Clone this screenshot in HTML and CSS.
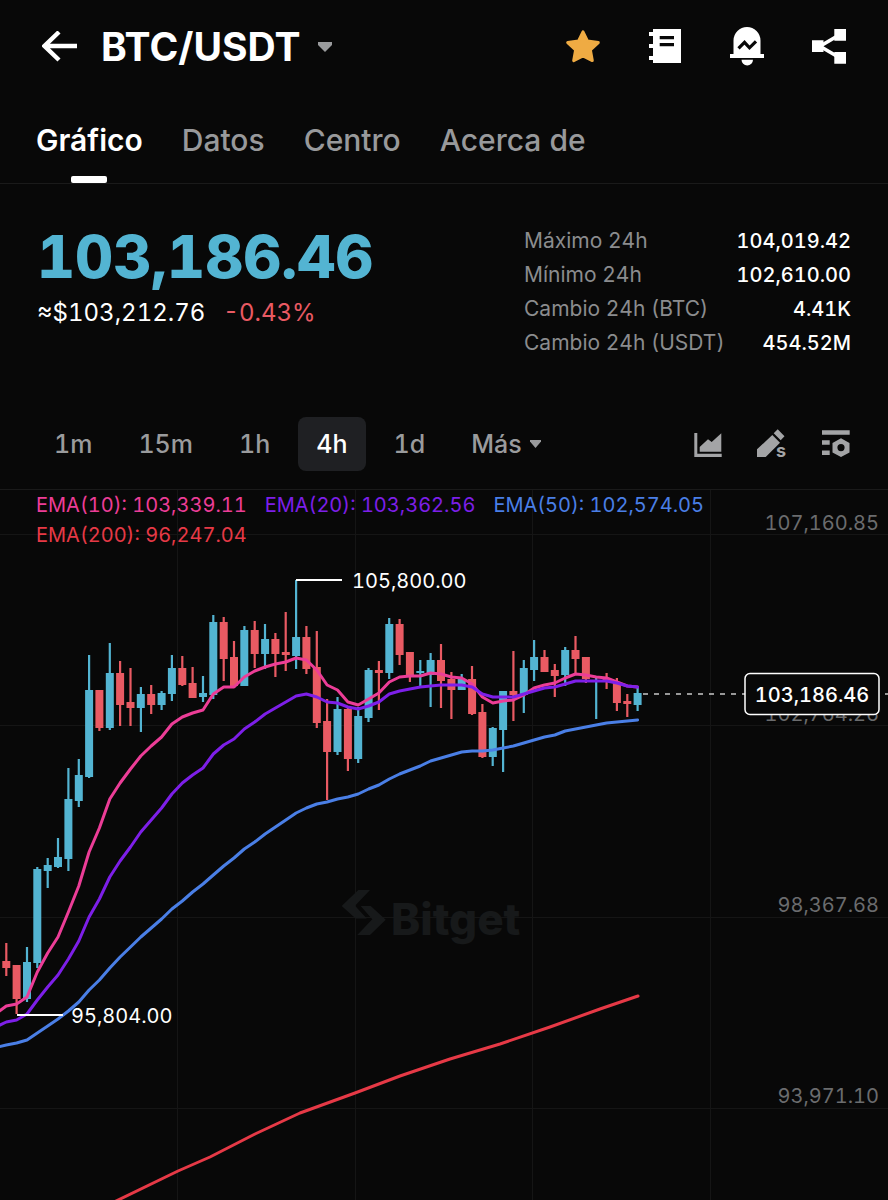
FILE: index.html
```html
<!DOCTYPE html>
<html lang="es">
<head>
    <meta charset="UTF-8">
    <meta name="viewport" content="width=device-width, initial-scale=1.0">
    <title>BTC/USDT</title>
    <link rel="stylesheet" href="styles.css">
</head>
<body>
    <header class="header">
        <button class="icon-btn" aria-label="Volver">
            <svg width="36" height="32" viewBox="0 0 36 32" fill="none" stroke="#fff" stroke-width="4.4"><path d="M17 1 2.500 15 17 29M2.500 15H35"/></svg>
        </button>
        <button class="pair">
            <h1>BTC/USDT</h1>
            <svg width="14" height="10" viewBox="0 0 14 10" fill="#9a9b9d"><path d="M0 0h14v3L7 10 0 3z"/></svg>
        </button>
        <div class="actions">
            <button class="icon-btn" aria-label="Favorito">
                <svg width="40" height="40" viewBox="0 0 40 40" fill="#efab43" stroke="#efab43" stroke-width="3" stroke-linejoin="round"><path d="M20 4.8l4.4 9.2 10.9 1.6-7.9 7.4 1.9 10.6-9.3-4.8-9.3 4.8 1.9-10.6-7.9-7.4L15.600 14z"/></svg>
            </button>
            <button class="icon-btn" aria-label="Órdenes">
                <svg width="40" height="40" viewBox="0 0 40 40" fill="#fff"><path fill-rule="evenodd" d="M8 2h28v34H8v-3H4v-4h4v-8H4v-4h4V9H4V5h4zM14.700 9v3.300H29V9zM14.700 16v3.300H29V16z"/></svg>
            </button>
            <button class="icon-btn" aria-label="Alertas">
                <svg width="40" height="40" viewBox="0 0 40 40" fill="#fff"><path d="M6.500 27V13.500a13.500 13.500 0 0 1 27 0V27H37v4H3v-4z"/><path d="M14.500 32.700h11.500a5.700 5.700 0 0 1-11.500 0z"/><path d="M11.500 21.300l6-6 5 5.500 6.500-6.500" fill="none" stroke="#080808" stroke-width="3.200"/></svg>
            </button>
            <button class="icon-btn" aria-label="Compartir">
                <svg width="40" height="40" viewBox="0 0 40 40" fill="#fff"><path d="M3 13.300h11.500V25H3zM25.300 2H37v11.700H25.300zM25.300 25H37v11.700H25.300z"/><path d="M31 7.500L11 19.300 31 31" fill="none" stroke="#fff" stroke-width="3.600"/></svg>
            </button>
        </div>
    </header>

    <nav class="tabs">
        <a href="#grafico" class="active">Gráfico</a>
        <a href="#datos">Datos</a>
        <a href="#centro">Centro</a>
        <a href="#acerca">Acerca de</a>
    </nav>

    <section class="summary">
        <div class="price">
            <div class="last">103,186.46</div>
            <div class="sub"><span>≈$103,212.76</span><span class="down">-0.43%</span></div>
        </div>
        <table class="stats">
            <tr><th scope="row">Máximo 24h</th><td>104,019.42</td></tr>
            <tr><th scope="row">Mínimo 24h</th><td>102,610.00</td></tr>
            <tr><th scope="row">Cambio 24h (BTC)</th><td>4.41K</td></tr>
            <tr><th scope="row">Cambio 24h (USDT)</th><td>454.52M</td></tr>
        </table>
    </section>

    <div class="toolbar">
        <div class="intervals">
            <button>1m</button>
            <button>15m</button>
            <button>1h</button>
            <button class="active">4h</button>
            <button>1d</button>
            <button>Más <svg width="11" height="8" viewBox="0 0 11 8" fill="#9a9b9d"><path d="M0 0h11v1.500L5.500 8 0 1.500z"/></svg></button>
        </div>
        <div class="tools">
            <button class="icon-btn" aria-label="Tipo de gráfico">
                <svg width="32" height="32" viewBox="0 0 32 32" fill="#a3a4a6"><path d="M2.300 5H5.300v20.700h24.400V29H2.300z"/><path d="M7.700 19L16 11.300l3.700 2.700L29.300 5.300v18.400H7.700z"/></svg>
            </button>
            <button class="icon-btn" aria-label="Dibujar">
                <svg width="32" height="32" viewBox="0 0 32 32" fill="#a3a4a6"><path d="M1 29v-7.700L16.300 7l7.700 7.700L9.700 29zM17.700 5.300l4-4 6.800 7-3.800 4z"/><text x="20" y="29" class="pen-letter">s</text></svg>
            </button>
            <button class="icon-btn" aria-label="Ajustes">
                <svg width="32" height="32" viewBox="0 0 32 32" fill="#a3a4a6"><path d="M2 2.300h27.700v4.400H2zM2 12.300h7.700v4.400H2zM2 22.500h7.700v4.400H2z"/><path fill-rule="evenodd" d="M21 10.300l8.500 4.700v9.400L21 29l-8.500-4.600V15zM21 16a3.600 3.600 0 1 0 0 7.200 3.600 3.600 0 0 0 0-7.200z"/></svg>
            </button>
        </div>
    </div>

    <main class="chart">
        <div class="legend">
            <span class="ema10">EMA(10): 103,339.11</span>
            <span class="ema20">EMA(20): 103,362.56</span>
            <span class="ema50">EMA(50): 102,574.05</span>
            <span class="ema200">EMA(200): 96,247.04</span>
        </div>
        <svg class="plot" viewBox="0 490 888 710">
            <path class="grid" d="M0 534.500H888M0 725.500H888M0 917.500H888M0 1108.500H888M177.500 490V1200M355.500 490V1200M532.500 490V1200M710.500 490V1200"/>
            <g class="watermark">
                <path d="M341.700 906L358.300 890H370L355 905.700 366.700 918.500H355.700zM360.700 906H370.700L385.700 919.700 370 935H357.300L372.300 919.300z"/>
                <text x="391" y="935">Bitget</text>
            </g>
            <g id="candles"></g>
            <path id="ema200" class="line ema200"/>
            <path id="ema50" class="line ema50"/>
            <path id="ema10" class="line ema10"/>
            <path id="ema20" class="line ema20"/>

            <path class="marker" d="M296 580H342M17 1015H63"/>
            <text class="mark" x="352" y="588">105,800.00</text>
            <text class="mark" x="71" y="1023">95,804.00</text>

            <g class="axis">
                <text x="879" y="530">107,160.85</text>
                <text x="879" y="721">102,764.26</text>
                <text x="879" y="912">98,367.68</text>
                <text x="879" y="1103">93,971.10</text>
            </g>
            <path class="last-line" d="M643 694H888"/>
            <rect class="tag" x="745" y="673.500" width="134" height="41" rx="5"/>
            <text class="tag-text" x="812" y="702">103,186.46</text>
        </svg>
    </main>

    <script>
        const START = 6.3;
        const STEP = 10.35;

        // up, high, body top, body bottom, low
        const candles = [
            [0,943,961,968,976],[0,965,965,999,1014],[1,947,962,999,1002],[1,867,869,963,968],
            [1,858,865,871,888],[1,838,857,867,868],[1,768,799,859,871],[1,759,775,801,807],
            [1,655,690,777,778],[0,690,690,728,731],[1,643,673,728,730],[0,661,673,705,726],
            [0,668,702,708,726],[1,687,694,708,732],[0,685,694,705,714],[1,691,693,705,710],
            [1,655,668,694,701],[0,656,668,685,686],[0,667,683,698,698],[1,676,693,697,702],
            [1,615,622,695,699],[0,617,622,659,681],[0,641,657,686,686],[1,626,630,686,686],
            [0,621,630,654,668],[1,624,639,654,669],[0,633,639,654,677],[0,612,652,655,671],
            [1,580,637,656,669],[0,626,637,669,674],[0,631,667,723,728],[0,699,721,752,800],
            [1,697,709,752,755],[0,708,709,759,771],[1,707,716,759,763],[1,668,670,718,722],
            [0,661,670,673,710],[1,618,624,673,679],[0,619,624,655,665],[0,652,652,675,682],
            [1,660,671,673,686],[1,653,660,675,707],[0,644,660,681,708],[0,672,679,690,719],
            [1,674,679,690,690],[0,666,679,714,715],[0,704,712,757,758],[1,727,728,757,766],
            [1,691,691,730,772],[0,651,691,695,721],[1,660,668,695,713],[1,640,657,670,681],
            [0,650,657,672,672],[0,664,670,676,697],[1,647,650,675,686],[0,636,650,659,675],
            [0,657,657,679,683],[1,678,680,682,719],[0,673,678,680,689],[0,678,682,703,711],
            [0,694,701,704,717],[1,688,693,705,711]
        ];

        const ema10 = [1006,1004,997,972,953,937,912,886,852,828,799,783,769,756,746,737,724,717,713,710,694,687,687,677,671,667,664,662,658,660,670,685,690,702,705,699,693,682,677,676,676,673,674,677,678,684,697,703,701,700,695,688,685,683,678,674,675,677,678,682,686,687];
        const ema20 = [1022,1020,1014,1000,987,975,959,941,917,899,877,861,847,832,820,808,794,783,775,768,754,745,739,729,722,714,708,702,696,694,697,702,703,707,709,706,702,694,691,689,687,686,685,685,685,687,694,697,697,697,694,691,688,687,684,681,681,681,681,683,686,687];
        const ema50 = [1045,1043,1040,1033,1026,1019,1011,1002,990,980,968,957,947,937,928,919,909,901,892,884,875,866,858,849,842,834,827,820,813,808,804,802,799,797,794,789,785,779,774,770,766,761,758,755,752,751,751,750,748,746,743,740,737,735,731,729,727,725,723,722,721,720];

        function xAt(i) {
            return START + i * STEP;
        }

        function rect(x, y, width, height) {
            return `<rect x="${x.toFixed(1)}" y="${y}" width="${width}" height="${height}"/>`;
        }

        document.getElementById('candles').innerHTML = candles.map(([up, high, top, bottom, low], i) => {
            const x = xAt(i);
            return `<g class="${up ? 'up' : 'fall'}">` +
                rect(x - 1.1, high, 2.2, low - high) +
                rect(x - 4, top, 8, bottom - top) + '</g>';
        }).join('');

        function drawLine(id, first, values) {
            const points = values.map((y, i) => `L${xAt(i).toFixed(1)} ${y}`).join('');
            document.getElementById(id).setAttribute('d', `M-2 ${first}${points}`);
        }

        drawLine('ema10', 1012, ema10);
        drawLine('ema20', 1026, ema20);
        drawLine('ema50', 1047, ema50);
        document.getElementById('ema200').setAttribute('d',
            'M112 1203L178 1171 210 1157 255 1134 300 1113 355 1093 400 1076 450 1059 500 1044 550 1027 600 1009 638 996');
    </script>
</body>
</html>
```
FILE: styles.css
```css
* {
    box-sizing: border-box;
}

body {
    margin: 0;
    background-color: #080808;
    color: #fff;
    font-family: Inter, "Liberation Sans", sans-serif;
    font-variant-numeric: tabular-nums;
}

button {
    padding: 0;
    border: none;
    background: none;
    color: inherit;
    font: inherit;
    cursor: pointer;
}

svg {
    display: block;
}

.header {
    display: flex;
    align-items: center;
    height: 94px;
    padding: 0 39px 0 42px;
}

.pair {
    display: flex;
    align-items: center;
    gap: 18px;
    margin-left: 23px;
}

.pair h1 {
    margin: 0;
    font-size: 39px;
    font-weight: 700;
    line-height: 48px;
}

.actions {
    display: flex;
    gap: 42px;
    margin-left: auto;
}

.tabs {
    display: flex;
    gap: 39px;
    height: 90px;
    padding: 0 36px;
    border-bottom: 1px solid #1a1a1a;
}

.tabs a {
    position: relative;
    color: #98999b;
    font-size: 30px;
    font-weight: 500;
    line-height: 92px;
    text-decoration: none;
}

.tabs .active {
    color: #fff;
    font-weight: 600;
}

.tabs .active::after {
    content: "";
    position: absolute;
    left: 50%;
    bottom: 0;
    width: 36px;
    height: 7px;
    margin-left: -18px;
    border-radius: 2px;
    background-color: #fff;
}

.summary {
    display: flex;
    justify-content: space-between;
    align-items: flex-start;
    height: 214px;
    padding: 40px 37px 0;
}

.last {
    color: #53b4d2;
    font-size: 59px;
    font-weight: 800;
    line-height: 66px;
}

.sub {
    display: flex;
    gap: 18px;
    font-size: 24px;
    line-height: 46px;
}

.down {
    color: #e95a63;
}

.stats {
    width: 327px;
    border-collapse: collapse;
    font-size: 21px;
    line-height: 34px;
}

.stats th,
.stats td {
    padding: 0;
    white-space: nowrap;
}

.stats th {
    color: #8b8c8e;
    font-weight: 400;
    text-align: left;
}

.stats td {
    font-size: 20px;
    font-weight: 500;
    text-align: right;
}

.toolbar {
    display: flex;
    justify-content: space-between;
    align-items: center;
    height: 92px;
    padding: 0 36px;
    border-bottom: 1px solid #1a1a1a;
}

.intervals {
    display: flex;
    gap: 10px;
}

.intervals button {
    display: flex;
    align-items: center;
    gap: 8px;
    height: 54px;
    padding: 0 18px;
    border-radius: 8px;
    color: #9a9b9d;
    font-size: 25px;
    font-weight: 500;
}

.intervals .active {
    background-color: #1f2023;
    color: #fff;
}

.tools {
    display: flex;
    gap: 32px;
}

.pen-letter {
    font-size: 18px;
    font-weight: 700;
}

.chart {
    position: relative;
}

.legend {
    position: absolute;
    top: 0;
    left: 36px;
    right: 144px;
    display: flex;
    flex-wrap: wrap;
    column-gap: 18px;
    font-size: 20px;
    line-height: 30px;
}

.legend .ema10 { color: #ec3d97; }
.legend .ema20 { color: #7d1fe8; }
.legend .ema50 { color: #4a7fe6; }
.legend .ema200 { color: #e63946; }

.plot {
    width: 100%;
    height: auto;
}

.grid {
    stroke: #151515;
}

.watermark {
    fill: #17191a;
    font-size: 44px;
    font-weight: 800;
}

.up { fill: #53b4d2; }
.fall { fill: #e95a63; }

.line {
    fill: none;
    stroke-width: 3;
    stroke-linejoin: round;
    stroke-linecap: round;
}

.line.ema10 { stroke: #ec3d97; }
.line.ema20 { stroke: #7d1fe8; }
.line.ema50 { stroke: #4a7fe6; }
.line.ema200 { stroke: #e63946; }

.marker {
    stroke: #fff;
    stroke-width: 2;
}

.mark,
.tag-text {
    fill: #fff;
    font-size: 20px;
}

.axis {
    fill: #6b6c6e;
    font-size: 20px;
    text-anchor: end;
}

.last-line {
    stroke: #c8c8c8;
    stroke-width: 1.5;
    stroke-dasharray: 5 6;
}

.tag {
    fill: #080808;
    stroke: #fff;
    stroke-width: 1.5;
}

.tag-text {
    font-weight: 500;
    text-anchor: middle;
}
```
